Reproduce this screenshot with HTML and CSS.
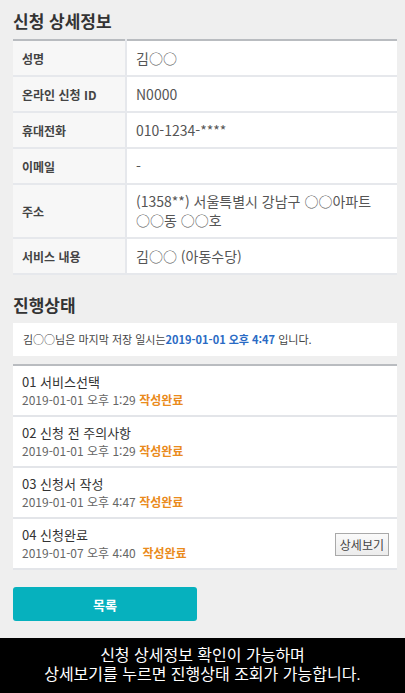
FILE: index.html
```html
<!DOCTYPE html>
<html lang="ko">
<head>
    <meta charset="UTF-8">
    <meta name="viewport" content="width=device-width, initial-scale=1.0">
    <title>신청 상세정보</title>
    <link rel="stylesheet" href="styles.css">
</head>
<body>
    <div class="container">
        <h2 class="section-title">신청 상세정보</h2>
        <table class="info-table">
            <tbody>
                <tr>
                    <th>성명</th>
                    <td>김○○</td>
                </tr>
                <tr>
                    <th>온라인 신청 ID</th>
                    <td>N0000</td>
                </tr>
                <tr>
                    <th>휴대전화</th>
                    <td>010-1234-****</td>
                </tr>
                <tr>
                    <th>이메일</th>
                    <td>-</td>
                </tr>
                <tr>
                    <th>주소</th>
                    <td>(1358**) 서울특별시 강남구 ○○아파트 ○○동 ○○호</td>
                </tr>
                <tr>
                    <th>서비스 내용</th>
                    <td>김○○ (아동수당)</td>
                </tr>
            </tbody>
        </table>

        <h2 class="section-title status-title">진행상태</h2>
        <p class="notice">김○○님은 마지막 저장 일시는<strong>2019-01-01 오후 4:47</strong> 입니다.</p>

        <ul class="step-list">
            <li class="step">
                <div class="step-info">
                    <p class="step-name">01 서비스선택</p>
                    <p class="step-date">2019-01-01 오후 1:29 <span class="done">작성완료</span></p>
                </div>
            </li>
            <li class="step">
                <div class="step-info">
                    <p class="step-name">02 신청 전 주의사항</p>
                    <p class="step-date">2019-01-01 오후 1:29 <span class="done">작성완료</span></p>
                </div>
            </li>
            <li class="step">
                <div class="step-info">
                    <p class="step-name">03 신청서 작성</p>
                    <p class="step-date">2019-01-01 오후 4:47 <span class="done">작성완료</span></p>
                </div>
            </li>
            <li class="step">
                <div class="step-info">
                    <p class="step-name">04 신청완료</p>
                    <p class="step-date">2019-01-07 오후 4:40 &nbsp;<span class="done">작성완료</span></p>
                </div>
                <button class="detail-btn">상세보기</button>
            </li>
        </ul>

        <button class="list-btn">목록</button>
    </div>

    <div class="guide-bar">
        <p>신청 상세정보 확인이 가능하며</p>
        <p>상세보기를 누르면 진행상태 조회가 가능합니다.</p>
    </div>
</body>
</html>
```

FILE: styles.css
```css
body {
    font-family: "Noto Sans CJK KR", "Noto Sans", sans-serif;
    margin: 0;
    padding: 0;
    background-color: #efefef;
    color: #333;
    height: 693px;
    display: flex;
    flex-direction: column;
}

.container {
    flex: 1;
    padding: 10px 8px 0 13px;
}

.section-title {
    margin: 0 0 7px;
    font-size: 17px;
    font-weight: bold;
    line-height: 22px;
    color: #333;
}

.status-title {
    margin-top: 19px;
}

.info-table {
    width: 100%;
    border-collapse: collapse;
    border-top: 2px solid #b9bcc0;
    background-color: white;
}

.info-table th,
.info-table td {
    border-bottom: 2px solid #e6e8ec;
    text-align: left;
    vertical-align: middle;
}

.info-table th {
    width: 103px;
    padding: 0 0 0 9px;
    height: 34px;
    font-size: 12px;
    font-weight: bold;
    color: #444;
    background-color: #f7f7f7;
    border-right: 2px solid #e6e8ec;
}

.info-table td {
    padding: 7px 8px 7px 9px;
    font-size: 14px;
    line-height: 19px;
    color: #555;
}

.notice {
    margin: 0 0 8px;
    padding: 8px 10px;
    background-color: white;
    font-size: 11px;
    line-height: 17px;
    color: #444;
}

.notice strong {
    color: #2a6bc4;
}

.step-list {
    list-style: none;
    margin: 0;
    padding: 0;
    border-top: 2px solid #b9bcc0;
}

.step {
    display: flex;
    align-items: center;
    justify-content: space-between;
    height: 49px;
    padding: 0 8px 0 9px;
    background-color: white;
    border-bottom: 2px solid #e3e5e9;
}

.step p {
    margin: 0;
}

.step-name {
    font-size: 13px;
    line-height: 18px;
    color: #333;
}

.step-date {
    margin-top: 1px;
    font-size: 12px;
    line-height: 17px;
    color: #666;
}

.done {
    font-weight: bold;
    color: #ea8b1c;
}

.detail-btn {
    font-family: inherit;
    font-size: 12px;
    color: #444;
    padding: 1px 4px;
    height: 23px;
    border: 1px solid #a9a9a9;
    background: linear-gradient(#fafafa, #ececec);
    margin-top: 2px;
}

.list-btn {
    display: block;
    width: 184px;
    height: 34px;
    margin-top: 17px;
    font-family: inherit;
    font-size: 13px;
    font-weight: bold;
    color: white;
    background-color: #06b1be;
    border: none;
    border-radius: 3px;
}

.guide-bar {
    height: 55px;
    padding-top: 9px;
    box-sizing: border-box;
    display: flex;
    flex-direction: column;
    gap: 1px;
    background-color: black;
    color: white;
    text-align: center;
    font-family: "Liberation Sans", "Noto Sans CJK KR", sans-serif;
    font-size: 16px;
}

.guide-bar p {
    margin: 0;
    line-height: 18px;
}
```
